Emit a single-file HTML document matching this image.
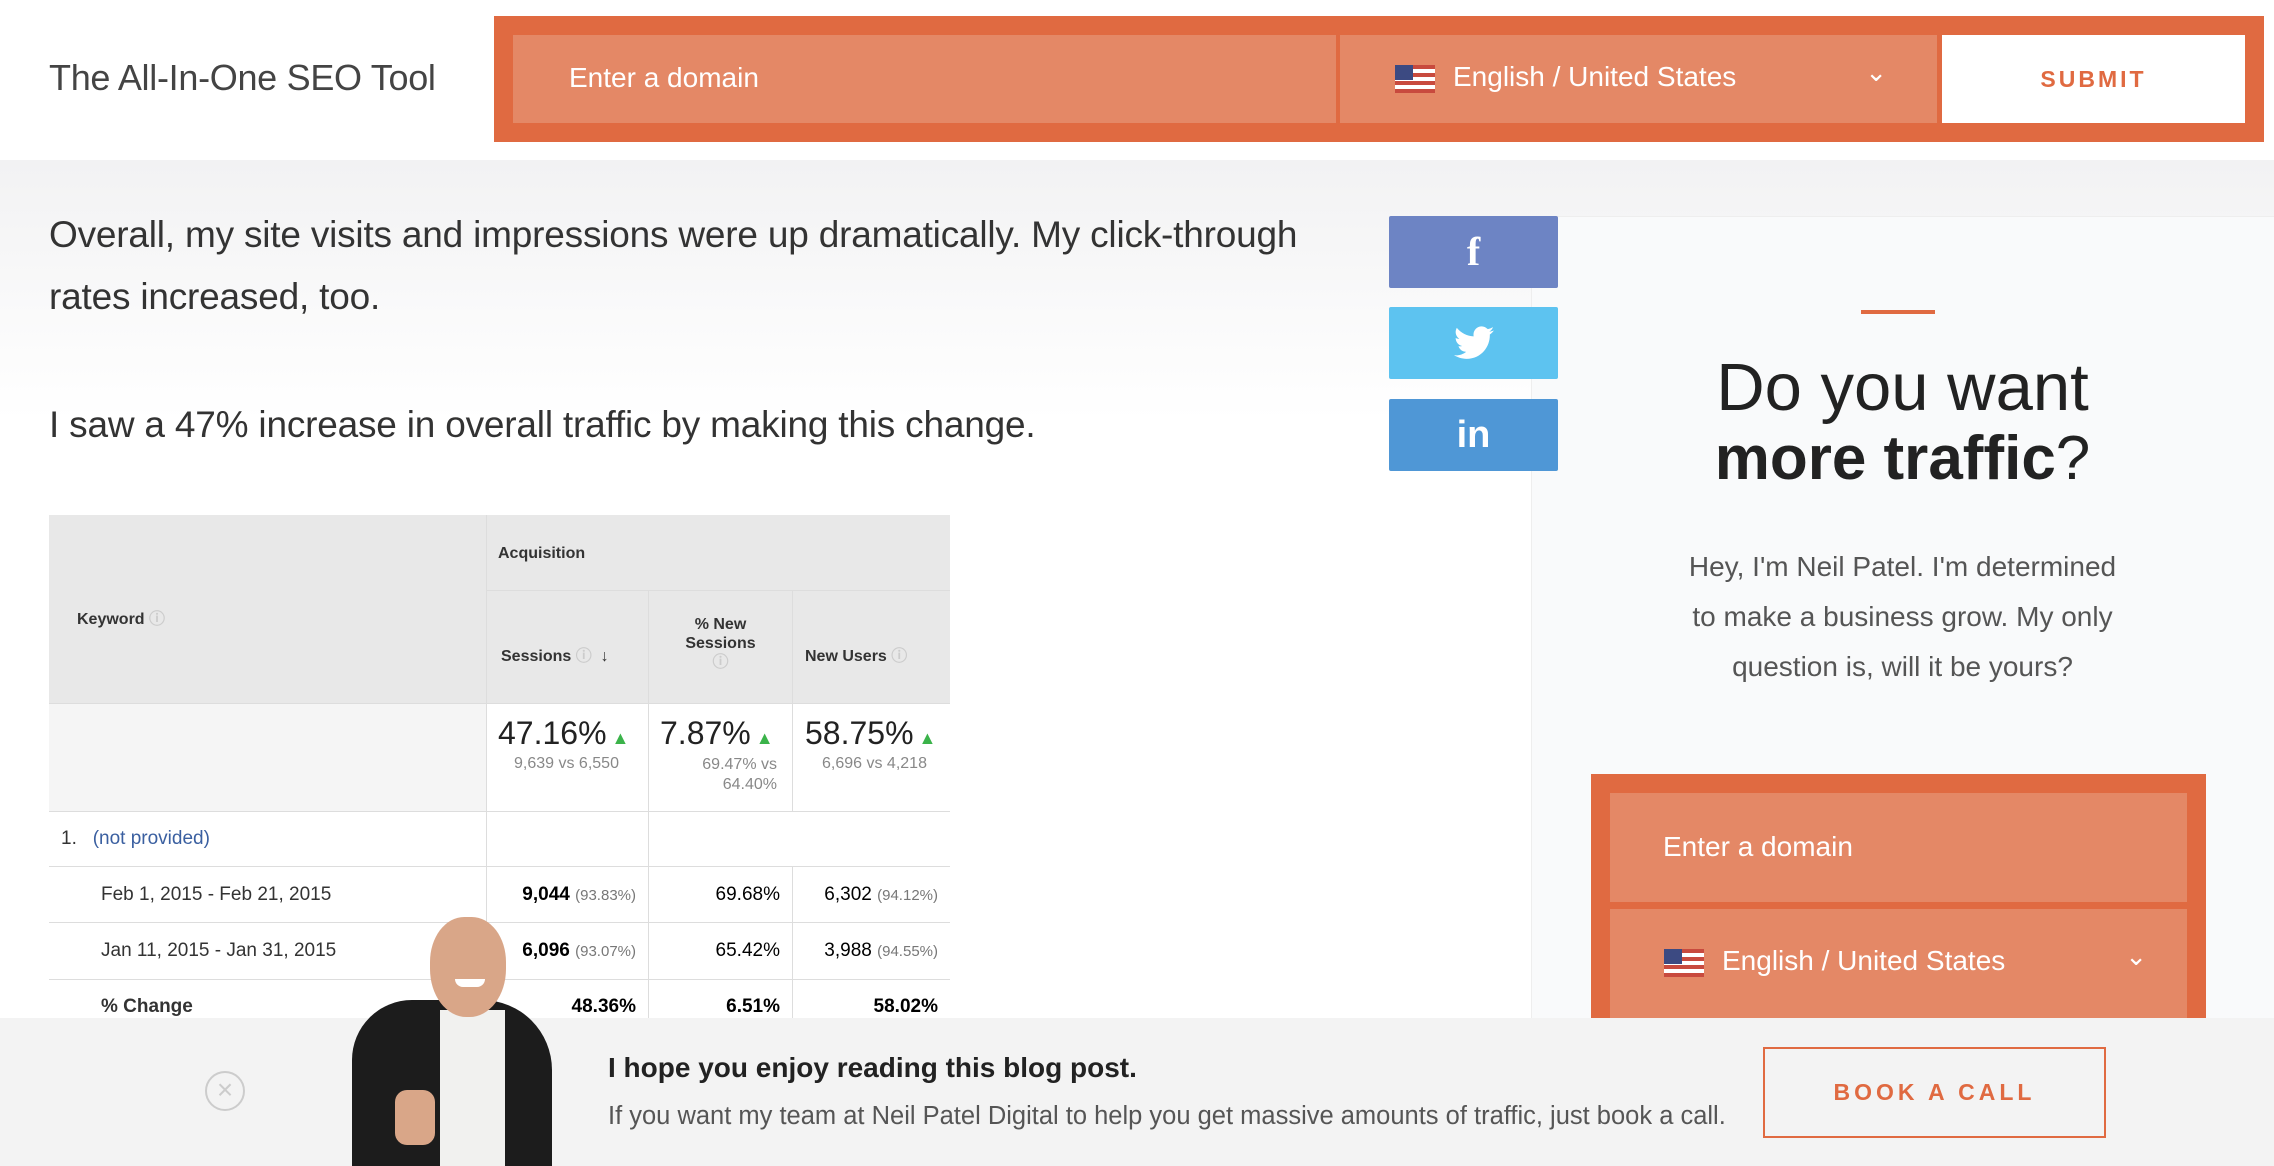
<!DOCTYPE html>
<html><head><meta charset="utf-8"><style>
*{margin:0;padding:0;box-sizing:border-box}
body{width:2274px;height:1166px;overflow:hidden;position:relative;font-family:"Liberation Sans",sans-serif;background:linear-gradient(#f2f2f3 160px,#fff 420px,#fff)}
.abs{position:absolute}
.hdr{left:0;top:0;width:2274px;height:160px;background:#fff}
.logo{left:49px;top:57px;font-size:36px;color:#444;font-weight:300;letter-spacing:-0.3px}
.obar{left:494px;top:16px;width:1770px;height:126px;background:#e06a41}
.inp{background:#e48866;color:#fff;font-size:28px}
.flag{display:inline-block;width:40px;height:28px;background:repeating-linear-gradient(#c84a3e 0 4px,#fff 4px 8px);position:relative;vertical-align:middle}
.flag:before{content:"";position:absolute;left:0;top:0;width:18px;height:15px;background:#3c4a82}
.p{left:49px;font-size:37px;color:#333;letter-spacing:-0.2px}
.soc{left:1389px;width:169px;height:72px;color:#fff;font-weight:bold;font-size:40px;text-align:center;line-height:72px;border-radius:2px}
.side{left:1531px;top:216px;width:743px;height:820px;background:#f9fafb;border-left:1px solid #eee;border-top:1px solid #eee}
.bot{left:0;top:1018px;width:2274px;height:148px;background:#f3f3f3}
</style></head><body>
<div class="abs hdr"></div>
<div class="abs logo">The All-In-One SEO Tool</div>
<div class="abs obar"></div>
<div class="abs inp" style="left:513px;top:35px;width:823px;height:88px;padding:27px 0 0 56px">Enter a domain</div>
<div class="abs inp" style="left:1340px;top:35px;width:597px;height:88px;padding:26px 0 0 55px"><span class="flag"></span><span style="margin-left:18px">English / United States</span><span style="position:absolute;right:50px;top:22px;font-size:26px">&#8964;</span></div>
<div class="abs" style="left:1942px;top:35px;width:303px;height:88px;background:#fff;color:#e06a41;font-weight:bold;font-size:23px;letter-spacing:3px;text-align:center;line-height:88px">SUBMIT</div>

<div class="abs p" style="top:214px">Overall, my site visits and impressions were up dramatically. My click-through</div>
<div class="abs p" style="top:276px">rates increased, too.</div>
<div class="abs p" style="top:404px">I saw a 47% increase in overall traffic by making this change.</div>

<div class="abs" style="left:49px;top:515px;width:901px;height:503px;overflow:hidden;background:#fff">
<div class="abs" style="left:0;top:0;width:901px;height:188px;background:#e8e8e8"></div>
<div class="abs" style="left:0;top:188px;width:437px;height:108px;background:#f5f5f5"></div>
<div class="abs" style="left:437px;top:0;width:1px;height:503px;background:#ddd"></div>
<div class="abs" style="left:599px;top:75px;width:1px;height:221px;background:#ddd"></div>
<div class="abs" style="left:599px;top:296px;width:1px;height:207px;background:#ddd"></div>
<div class="abs" style="left:743px;top:75px;width:1px;height:221px;background:#ddd"></div>
<div class="abs" style="left:743px;top:351px;width:1px;height:152px;background:#ddd"></div>
<div class="abs" style="left:437px;top:75px;width:464px;height:1px;background:#ddd"></div>
<div class="abs" style="left:0;top:188px;width:901px;height:1px;background:#ddd"></div>
<div class="abs" style="left:0;top:296px;width:901px;height:1px;background:#ddd"></div>
<div class="abs" style="left:0;top:351px;width:901px;height:1px;background:#ddd"></div>
<div class="abs" style="left:0;top:407px;width:901px;height:1px;background:#ddd"></div>
<div class="abs" style="left:0;top:464px;width:901px;height:1px;background:#ddd"></div>
<div class="abs" style="left:449px;top:30px;font-size:16px;font-weight:bold;color:#333">Acquisition</div>
<div class="abs" style="left:28px;top:90px;font-size:16px;font-weight:bold;color:#333">Keyword <span style="color:#ccc">&#9432;</span></div>
<div class="abs" style="left:452px;top:127px;font-size:16px;font-weight:bold;color:#333">Sessions <span style="color:#ccc">&#9432;</span> &nbsp;<span style="font-weight:normal">&#8595;</span></div>
<div class="abs" style="left:600px;top:100px;width:143px;text-align:center;font-size:16px;font-weight:bold;color:#333;line-height:19px">% New<br>Sessions<br><span style="color:#ccc">&#9432;</span></div>
<div class="abs" style="left:756px;top:127px;font-size:16px;font-weight:bold;color:#333">New Users <span style="color:#ccc">&#9432;</span></div>
<div class="abs" style="left:449px;top:200px;font-size:32px;color:#222">47.16%<span style="color:#3bb34a;font-size:18px"> &#9650;</span></div>
<div class="abs" style="left:465px;top:240px;font-size:16px;color:#888">9,639 vs 6,550</div>
<div class="abs" style="left:611px;top:200px;font-size:32px;color:#222">7.87%<span style="color:#3bb34a;font-size:18px"> &#9650;</span></div>
<div class="abs" style="left:600px;top:240px;width:128px;text-align:right;font-size:16px;color:#888;line-height:20px">69.47% vs<br>64.40%</div>
<div class="abs" style="left:756px;top:200px;font-size:32px;color:#222">58.75%<span style="color:#3bb34a;font-size:18px"> &#9650;</span></div>
<div class="abs" style="left:773px;top:240px;font-size:16px;color:#888">6,696 vs 4,218</div>
<div class="abs" style="left:12px;top:313px;font-size:19px;color:#333">1. &nbsp; <span style="color:#3a5fa0">(not provided)</span></div>
<div class="abs" style="left:52px;top:369px;font-size:19px;color:#333">Feb 1, 2015 - Feb 21, 2015</div>
<div class="abs" style="left:52px;top:425px;font-size:19px;color:#333">Jan 11, 2015 - Jan 31, 2015</div>
<div class="abs" style="left:52px;top:481px;font-size:19px;color:#333;font-weight:bold">% Change</div>
<div class="abs" style="left:437px;top:369px;width:150px;text-align:right;font-size:19px"><b>9,044</b> <span style="font-size:15px;color:#777">(93.83%)</span></div>
<div class="abs" style="left:437px;top:425px;width:150px;text-align:right;font-size:19px"><b>6,096</b> <span style="font-size:15px;color:#777">(93.07%)</span></div>
<div class="abs" style="left:437px;top:481px;width:150px;text-align:right;font-size:19px;font-weight:bold">48.36%</div>
<div class="abs" style="left:600px;top:369px;width:131px;text-align:right;font-size:19px">69.68%</div>
<div class="abs" style="left:600px;top:425px;width:131px;text-align:right;font-size:19px">65.42%</div>
<div class="abs" style="left:600px;top:481px;width:131px;text-align:right;font-size:19px;font-weight:bold">6.51%</div>
<div class="abs" style="left:744px;top:369px;width:145px;text-align:right;font-size:19px">6,302 <span style="font-size:15px;color:#777">(94.12%)</span></div>
<div class="abs" style="left:744px;top:425px;width:145px;text-align:right;font-size:19px">3,988 <span style="font-size:15px;color:#777">(94.55%)</span></div>
<div class="abs" style="left:744px;top:481px;width:145px;text-align:right;font-size:19px;font-weight:bold">58.02%</div>
</div>

<div class="abs side"></div>
<div class="abs soc" style="top:216px;background:#6d84c4;font-family:'Liberation Serif',serif">f</div>
<div class="abs soc" style="top:307px;background:#5dc3f0"><svg width="40" height="34" viewBox="0 0 24 20" style="margin-top:19px"><path fill="#fff" d="M24 2.4c-.9.4-1.8.6-2.8.8 1-.6 1.8-1.6 2.2-2.7-1 .6-2 1-3.1 1.2C19.3.7 18 0 16.6 0c-2.7 0-4.9 2.2-4.9 4.9 0 .4 0 .8.1 1.1C7.7 5.8 4.1 3.900 1.7.9c-.4.7-.7 1.6-.7 2.5 0 1.7.9 3.200 2.200 4.1-.8 0-1.6-.2-2.2-.6v.1c0 2.4 1.700 4.400 3.900 4.800-.4.1-.8.2-1.300.2-.3 0-.6 0-.9-.1.6 2 2.4 3.4 4.6 3.4-1.7 1.3-3.8 2.1-6.1 2.1-.4 0-.8 0-1.2-.1 2.2 1.4 4.8 2.2 7.5 2.2 9.1 0 14-7.5 14-14v-.6c1-.7 1.8-1.6 2.500-2.500z"/></svg></div>
<div class="abs soc" style="top:399px;background:#4f97d6;font-size:38px">in</div>

<div class="abs" style="left:1861px;top:310px;width:74px;height:4px;background:#e06a41"></div>
<div class="abs" style="left:1531px;top:349px;width:743px;text-align:center;font-size:67px;color:#222;font-weight:300">Do you want</div>
<div class="abs" style="left:1531px;top:423px;width:743px;text-align:center;font-size:62px;color:#222"><b>more traffic</b>?</div>
<div class="abs" style="left:1531px;top:542px;width:743px;text-align:center;font-size:28px;color:#555;line-height:50px">Hey, I'm Neil Patel. I'm determined<br>to make a business grow. My only<br>question is, will it be yours?</div>
<div class="abs" style="left:1591px;top:774px;width:615px;height:260px;background:#e06a41"></div>
<div class="abs inp" style="left:1610px;top:793px;width:577px;height:109px;padding:38px 0 0 53px">Enter a domain</div>
<div class="abs inp" style="left:1610px;top:909px;width:577px;height:120px;padding:36px 0 0 54px"><span class="flag"></span><span style="margin-left:18px">English / United States</span><span style="position:absolute;right:40px;top:32px;font-size:26px">&#8964;</span></div>

<div class="abs bot"></div>
<div class="abs" style="left:205px;top:1071px;width:40px;height:40px;border:2px solid #ccc;border-radius:50%;color:#ccc;text-align:center;line-height:34px;font-size:28px">&#215;</div>
<div class="abs" style="left:352px;top:1000px;width:200px;height:166px;background:#1c1c1c;border-radius:60px 70px 0 0"></div>
<div class="abs" style="left:440px;top:1010px;width:65px;height:156px;background:#f1f1ef"></div>
<div class="abs" style="left:430px;top:917px;width:76px;height:100px;background:#d9a688;border-radius:45% 45% 48% 48%"></div>
<div class="abs" style="left:455px;top:979px;width:30px;height:8px;background:#fff;border-radius:0 0 8px 8px"></div>
<div class="abs" style="left:395px;top:1090px;width:40px;height:55px;background:#d9a688;border-radius:12px"></div>
<div class="abs" style="left:608px;top:1052px;font-size:28px;font-weight:bold;color:#222">I hope you enjoy reading this blog post.</div>
<div class="abs" style="left:608px;top:1102px;font-size:25.5px;color:#555">If you want my team at Neil Patel Digital to help you get massive amounts of traffic, just book a call.</div>
<div class="abs" style="left:1763px;top:1047px;width:343px;height:91px;border:2px solid #e06a41;color:#e06a41;font-weight:bold;font-size:23px;letter-spacing:4px;text-align:center;line-height:87px">BOOK A CALL</div>
</body></html>
